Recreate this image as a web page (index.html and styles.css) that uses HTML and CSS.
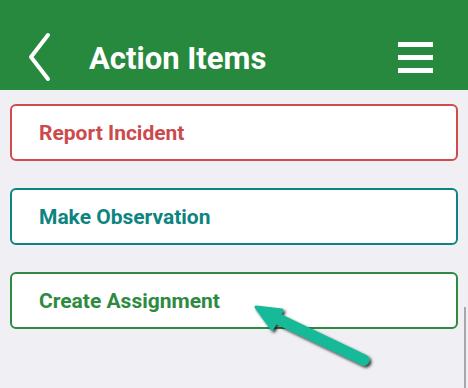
FILE: index.html
```html
<!DOCTYPE html>
<html lang="en">
<head>
  <meta charset="UTF-8" />
  <meta name="viewport" content="width=device-width, initial-scale=1.0"/>
  <title>Action Items</title>
  <link rel="stylesheet" href="styles.css">
</head>
<body>

  <!-- Top bar -->
  <header class="topbar">
    <svg class="back" width="24" height="50" viewBox="0 0 24 50">
      <polyline points="20,3 3,25 20,47" fill="none" stroke="#fff" stroke-width="4" stroke-linecap="round" stroke-linejoin="round"/>
    </svg>
    <h1 class="title">Action Items</h1>
    <div class="menu">
      <span></span>
      <span></span>
      <span></span>
    </div>
  </header>

  <!-- Action list -->
  <main class="actions">
    <a class="action incident" href="#">Report Incident</a>
    <a class="action observation" href="#">Make Observation</a>
    <a class="action assignment" href="#">Create Assignment</a>
  </main>

  <div class="scrollbar"></div>

  <!-- Pointer arrow -->
  <svg class="pointer" width="468" height="388" viewBox="0 0 468 388">
    <defs>
      <filter id="shadow" x="-20%" y="-20%" width="140%" height="140%">
        <feDropShadow dx="2" dy="2" stdDeviation="1.6" flood-color="#000" flood-opacity="0.8"/>
      </filter>
    </defs>
    <g filter="url(#shadow)">
      <line x1="364" y1="360" x2="272" y2="316" stroke="#13b998" stroke-width="11" stroke-linecap="round"/>
      <polygon points="256,307 282,310 272,329" fill="#13b998" stroke="#13b998" stroke-width="3" stroke-linejoin="round"/>
    </g>
  </svg>

</body>
</html>
```

FILE: styles.css
```css
body {
  margin: 0;
  font-family: Roboto, "Liberation Sans", sans-serif;
  background: #f0eff4;
  width: 468px;
  height: 388px;
  overflow: hidden;
  position: relative;
}
.topbar {
  background: #27893d;
  height: 90px;
  box-sizing: border-box;
  padding: 26px 35px 0 28px;
  display: flex;
  align-items: center;
}
.back {
  display: block;
  margin-top: -2px;
}
.title {
  flex: 1;
  margin: 0 0 0 37px;
  color: #fff;
  font-size: 31px;
  font-weight: 700;
}
.menu {
  display: flex;
  flex-direction: column;
  gap: 8px;
  margin-top: -2px;
}
.menu span {
  display: block;
  width: 35px;
  height: 5px;
  background: #fff;
}
.actions {
  display: flex;
  flex-direction: column;
  gap: 27px;
  padding: 14px 10px 0;
}
.action {
  display: flex;
  align-items: center;
  height: 57px;
  box-sizing: border-box;
  padding: 0 27px;
  background: #fff;
  border: 2px solid;
  border-radius: 6px;
  font-size: 21px;
  font-weight: 700;
  text-decoration: none;
}
.incident {
  color: #cc4a4c;
  border-color: #cf4b4d;
}
.observation {
  color: #0d8480;
  border-color: #0e8482;
}
.assignment {
  color: #2d8a3f;
  border-color: #2e8a40;
}
.scrollbar {
  position: absolute;
  right: 2px;
  top: 307px;
  bottom: 0;
  width: 2px;
  background: #a8a8ac;
}
.pointer {
  position: absolute;
  left: 0;
  top: 0;
  pointer-events: none;
}
```
